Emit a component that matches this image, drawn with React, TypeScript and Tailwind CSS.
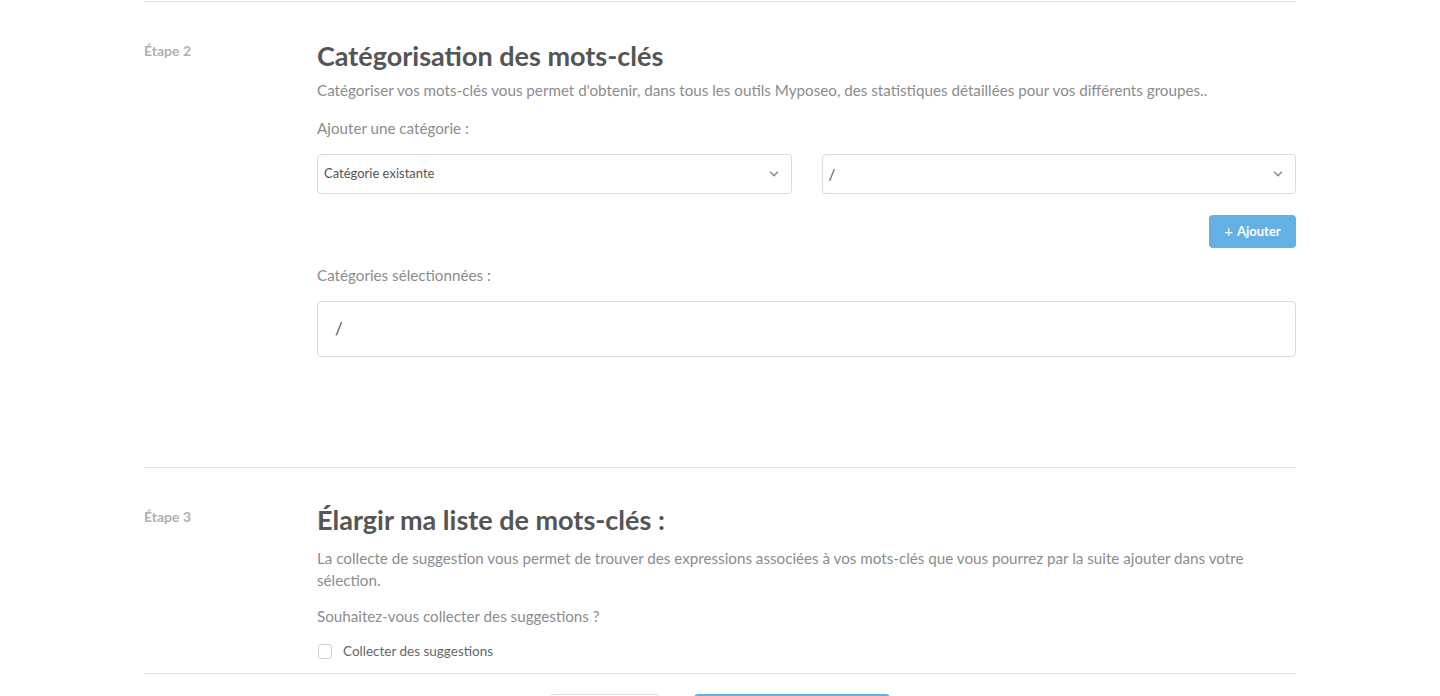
import { ChevronDown } from "lucide-react";

const body = "font-['Source_Sans_Pro','Lato',sans-serif]";
const title = "font-['Lato','Noto_Sans',sans-serif]";

function Select({ value, small }: { value: string; small?: boolean }) {
  return (
    <div className="flex h-10 flex-1 items-center justify-between rounded-[4px] border border-[#dcdcdc] bg-white pl-[6px] pr-[10px]">
      <span className={`${small ? "text-[13px]" : "text-[15px]"} text-[#555]`}>{value}</span>
      <ChevronDown className="h-3.5 w-3.5 text-[#888]" strokeWidth={2.5} />
    </div>
  );
}

function Step({ label, children }: { label: string; children: React.ReactNode }) {
  return (
    <div className="flex pt-[39px]">
      <div className="w-[173px] shrink-0 text-[14px] font-bold leading-[20px] text-[#b0b0b0]">{label}</div>
      <div className="min-w-0 flex-1">{children}</div>
    </div>
  );
}

export default function App() {
  return (
    <div className={`h-[696px] overflow-hidden bg-white ${body}`}>
      <div className="mx-auto mt-px w-[1152px] border-t border-[#e2e2e2]">
        <div className="h-[465px]">
          <Step label="Étape 2">
            <h2 className={`${title} text-[27px] font-bold leading-[30px] text-[#555]`}>Catégorisation des mots-clés</h2>
            <p className="mt-[8px] text-[15.2px] leading-[22px] text-[#8c8c8c]">
              Catégoriser vos mots-clés vous permet d'obtenir, dans tous les outils Myposeo, des statistiques détaillées pour vos différents groupes..
            </p>
            <p className="mt-[16px] text-[15.2px] leading-[22px] text-[#8c8c8c]">Ajouter une catégorie :</p>
            <div className="mt-[15px] flex gap-[30px]">
              <Select value="Catégorie existante" small />
              <Select value="/" />
            </div>
            <div className="mt-[21px] flex justify-end">
              <button className="flex h-[33px] w-[87px] items-center justify-center gap-1 rounded-[4px] bg-[#64b0e4] text-[13px] font-bold text-white">
                <span className="text-[15px] font-normal leading-none">+</span> Ajouter
              </button>
            </div>
            <p className="mt-[16px] text-[15.2px] leading-[22px] text-[#8c8c8c]">Catégories sélectionnées :</p>
            <div className="mt-[15px] flex h-14 items-center rounded-[4px] border border-[#dcdcdc] px-[17px] text-[17px] text-[#555]">
              /
            </div>
          </Step>
        </div>
        <div className="border-t border-[#e2e2e2]">
          <Step label="Étape 3">
            <h2 className={`${title} -mt-[2px] text-[27px] font-bold leading-[30px] text-[#555]`}>Élargir ma liste de mots-clés :</h2>
            <p className="mt-[12px] text-[15.2px] leading-[22px] text-[#8c8c8c]">
              La collecte de suggestion vous permet de trouver des expressions associées à vos mots-clés que vous pourrez par la suite ajouter dans votre sélection.
            </p>
            <p className="mt-[14px] text-[15.2px] leading-[22px] text-[#8c8c8c]">Souhaitez-vous collecter des suggestions ?</p>
            <label className="mt-[14px] flex items-center gap-[11px] pb-[12px]">
              <span className="ml-px h-[15px] w-[14px] rounded-[3px] border border-[#cfcfcf] bg-white" />
              <span className="text-[13.5px] text-[#666]">Collecter des suggestions</span>
            </label>
          </Step>
        </div>
        <div className="flex gap-[34px] border-t border-[#e2e2e2] pt-[20px] pl-[406px]">
          <div className="h-10 w-[110px] shrink-0 rounded-[4px] border border-[#dcdcdc] bg-white" />
          <div className="h-10 w-[196px] shrink-0 rounded-[4px] bg-[#64b0e4]" />
        </div>
      </div>
    </div>
  );
}
